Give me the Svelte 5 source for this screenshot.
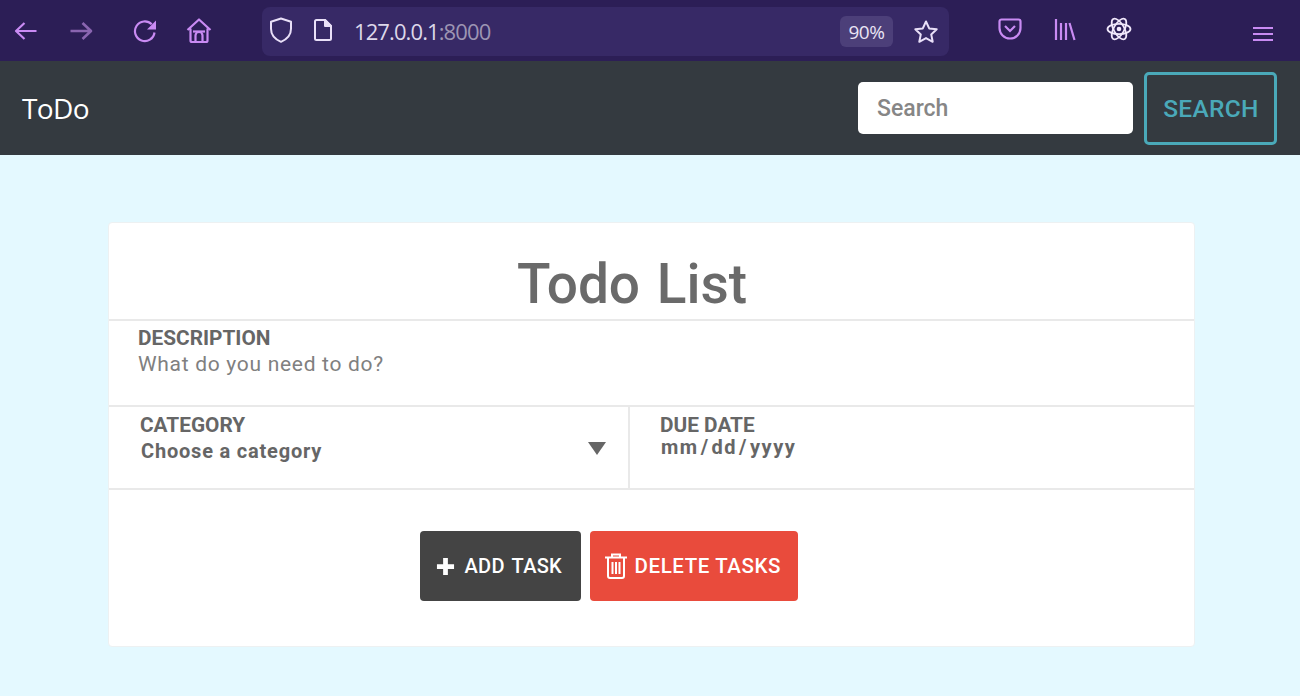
<script>
  let description = $state('');
  let query = $state('');
</script>

<div class="chrome">
  <div class="nav-icons">
    <button class="icon" aria-label="Back">
      <svg width="26" height="26" viewBox="0 0 26 26"><path d="M23.5 13H3M11.5 5L3 13l8.500 8" /></svg>
    </button>
    <button class="icon dim" aria-label="Forward">
      <svg width="26" height="26" viewBox="0 0 26 26"><path d="M2.500 13H23M14.500 5l8.500 8-8.500 8" /></svg>
    </button>
    <button class="icon reload" aria-label="Reload">
      <svg width="26" height="26" viewBox="0 0 26 26"><path d="M21.500 14.500a9.800 9.800 0 1 1-2.800-8.200" /><path class="solid" d="M23 2.500v9h-9z" /></svg>
    </button>
    <button class="icon home" aria-label="Home">
      <svg width="26" height="26" viewBox="0 0 26 26"><path d="M1.500 12L13 1.500 24.500 12M4.500 10.500v12a1.500 1.500 0 0 0 1.500 1.500h14a1.500 1.500 0 0 0 1.500-1.500v-12M9.500 24v-6.500a3.500 3.500 0 0 1 7 0V24" /><path d="M7 13.500h12" /></svg>
    </button>
  </div>
  <div class="urlbar">
    <svg class="shield" width="24" height="26" viewBox="0 0 24 26"><path d="M12 1.500l10 3.300v7c0 6-4 10.500-10 13-6-2.500-10-7-10-13v-7z" /></svg>
    <svg class="page" width="20" height="24" viewBox="0 0 20 24"><path d="M3.500 2h8.500l6 6v12.500a1.500 1.500 0 0 1-1.500 1.500h-13A1.500 1.500 0 0 1 2 20.500v-17A1.500 1.500 0 0 1 3.500 2z" /><path class="fill" d="M12 2l6 6h-6z" /></svg>
    <span class="url">127.0.0.1<span class="port">:8000</span></span>
    <span class="zoom">90%</span>
    <svg class="star" width="26" height="26" viewBox="0 0 26 26"><path d="M13 2.500l3.200 6.900 7.500.9-5.500 5.100 1.500 7.400-6.700-3.700-6.700 3.700 1.500-7.400-5.500-5.100 7.500-.9z" /></svg>
  </div>
  <div class="tools">
    <svg class="pocket" width="24" height="22" viewBox="0 0 24 22"><path d="M3.500 1.500h17a2 2 0 0 1 2 2V10c0 5.800-4.700 10.500-10.500 10.500S1.500 15.800 1.500 10V3.500a2 2 0 0 1 2-2z" /><path d="M7 8l5 5 5-5" /></svg>
    <svg class="library" width="24" height="24" viewBox="0 0 24 24"><path d="M3 2v21M8 6v17M13 6v17M16.500 6l5 17" /></svg>
    <svg class="react" width="26" height="26" viewBox="0 0 26 26">
      <ellipse cx="13" cy="13" rx="11.500" ry="5.200" />
      <ellipse cx="13" cy="13" rx="11.500" ry="5.200" transform="rotate(60 13 13)" />
      <ellipse cx="13" cy="13" rx="11.500" ry="5.200" transform="rotate(120 13 13)" />
      <circle class="core" cx="13" cy="13" r="2.300" />
    </svg>
  </div>
  <svg class="menu" width="20" height="16" viewBox="0 0 20 16"><path d="M0 2h20M0 8h20M0 14h20" /></svg>
</div>

<nav class="navbar">
  <span class="brand">ToDo</span>
  <form class="search" onsubmit={(e) => e.preventDefault()}>
    <input type="text" placeholder="Search" bind:value={query} />
    <button type="submit">SEARCH</button>
  </form>
</nav>

<main>
  <section class="card">
    <h1>Todo List</h1>
    <div class="row desc">
      <label for="description">DESCRIPTION</label>
      <input id="description" type="text" placeholder="What do you need to do?" bind:value={description} />
    </div>
    <div class="row split">
      <div class="cell category">
        <span class="label">CATEGORY</span>
        <span class="value">Choose a category</span>
        <span class="caret"></span>
      </div>
      <div class="cell due">
        <span class="label">DUE DATE</span>
        <span class="value date">mm<i>/</i>dd<i>/</i>yyyy</span>
      </div>
    </div>
    <div class="actions">
      <button class="add">
        <svg width="19" height="19" viewBox="0 0 20 20"><path d="M7.500 1h5v6.500H19v5h-6.500V19h-5v-6.500H1v-5h6.500z" /></svg>
        ADD TASK
      </button>
      <button class="delete">
        <svg width="24" height="26" viewBox="0 0 24 26"><path d="M1 4.500h22M8 4.500V1.500h8v3M4 4.500V23a2 2 0 0 0 2 2h12a2 2 0 0 0 2-2V4.500M8.500 9v12M12 9v12M15.500 9v12" /></svg>
        DELETE TASKS
      </button>
    </div>
  </section>
</main>

<style>
  :global(body) {
    background: #e4f9ff;
    font-family: Roboto, sans-serif;
  }

  button {
    font-family: inherit;
    cursor: pointer;
  }

  /* browser toolbar */
  .chrome {
    display: flex;
    align-items: flex-start;
    height: 61px;
    background: #2c1e56;
    box-sizing: border-box;
    padding-top: 7px;
  }

  .nav-icons {
    display: flex;
    align-items: center;
    width: 262px;
    height: 48px;
    padding-left: 13px;
    box-sizing: border-box;
  }

  .icon {
    display: flex;
    padding: 0;
    border: 0;
    background: none;
    margin-right: 29px;
  }

  .icon.reload {
    margin-left: 10px;
  }

  .icon.home {
    margin-left: -2px;
  }

  svg path, svg ellipse {
    fill: none;
  }

  .icon path {
    stroke: #c98bf3;
    stroke-width: 2.200;
    stroke-linejoin: round;
  }

  .icon.dim path {
    stroke: #8a65b0;
    stroke-width: 2.600;
  }

  .icon .solid {
    fill: #c98bf3;
    stroke: none;
  }

  .urlbar {
    display: flex;
    align-items: center;
    width: 687px;
    height: 49px;
    padding: 0 10px 0 7px;
    box-sizing: border-box;
    background: #372966;
    border-radius: 8px;
  }

  .shield path, .page path, .star path {
    stroke: #e9e0f8;
    stroke-width: 2;
    stroke-linejoin: round;
  }

  .shield, .page {
    margin-bottom: 3px;
  }

  .page {
    margin-left: 20px;
  }

  .page .fill {
    fill: #e9e0f8;
  }

  .url {
    margin: 0 0 2px 21px;
    flex: 1;
    font: 22px "Open Sans", sans-serif;
    letter-spacing: -0.9px;
    color: #ddd8ea;
  }

  .port {
    color: #9d95b3;
  }

  .zoom {
    display: flex;
    align-items: center;
    justify-content: center;
    width: 53px;
    height: 31px;
    margin-right: 20px;
    border-radius: 6px;
    background: #4c3f79;
    color: #e9e4f4;
    font: 500 19px "Open Sans", sans-serif;
    letter-spacing: -0.4px;
  }

  .tools {
    display: flex;
    align-items: center;
    gap: 31px;
    height: 44px;
    margin-left: 49px;
  }

  .pocket path, .library path {
    stroke: #c98bf3;
    stroke-width: 2.200;
  }

  .react {
    margin-left: -2px;
  }

  .react ellipse {
    stroke: #f1e8fb;
    stroke-width: 1.800;
  }

  .react .core {
    fill: #f1e8fb;
  }

  .menu {
    margin: 19px 27px 0 auto;
  }

  .menu path {
    stroke: #c98bf3;
    stroke-width: 2;
  }

  /* page navbar */
  .navbar {
    display: flex;
    align-items: center;
    justify-content: space-between;
    height: 94px;
    padding: 0 23px 0 22px;
    background: #343a40;
  }

  .brand {
    color: #fff;
    font: 500 28px "Open Sans", sans-serif;
    letter-spacing: -0.6px;
  }

  .search {
    display: flex;
    align-items: center;
    gap: 11px;
  }

  .search input {
    width: 275px;
    height: 52px;
    padding: 0 19px;
    box-sizing: border-box;
    border: 0;
    border-radius: 5px;
    background: #fff;
    font: 500 23px Roboto, sans-serif;
    outline: none;
  }

  .search input::placeholder {
    color: #868686;
    opacity: 1;
  }

  .search button {
    width: 133px;
    height: 73px;
    border: 3px solid #4aa9b9;
    border-radius: 5px;
    background: none;
    color: #4aa9b9;
    font-size: 24.500px;
    font-weight: 500;
    letter-spacing: 0.3px;
    padding: 0 0 0 1px;
  }

  /* card */
  main {
    padding: 67px 105px 49px 108px;
  }

  .card {
    background: #fff;
    border: 1px solid #edf1f2;
    border-radius: 4px;
    box-sizing: border-box;
    height: 425px;
  }

  h1 {
    margin: 0;
    height: 98px;
    padding-right: 39px;
    box-sizing: border-box;
    border-bottom: 2px solid #e9e9e9;
    text-align: center;
    color: #6a6a6a;
    font: 500 55px/123px Roboto, sans-serif;
    word-spacing: 3px;
    overflow: hidden;
  }

  .row {
    border-bottom: 2px solid #e9e9e9;
    box-sizing: border-box;
  }

  .desc {
    display: flex;
    flex-direction: column;
    height: 86px;
    padding: 5px 29px 0;
  }

  .desc label, .label {
    color: #666;
    font: 700 20.800px/24px Roboto, sans-serif;
  }

  .desc input {
    border: 0;
    padding: 0;
    margin-top: 1px;
    height: 26px;
    font: 21px Roboto, sans-serif;
    letter-spacing: 0.7px;
    outline: none;
  }

  .desc input::placeholder {
    color: #808080;
    opacity: 1;
  }

  .split {
    display: grid;
    grid-template-columns: 521px 1fr;
    height: 83px;
  }

  .cell {
    position: relative;
    display: flex;
    flex-direction: column;
    padding-top: 6px;
  }

  .category {
    border-right: 2px solid #e9e9e9;
    padding-left: 31px;
  }

  .due {
    padding-left: 30px;
  }

  .value {
    margin: 1px 0 0 1px;
    color: #666;
    font: 700 20px/26px Roboto, sans-serif;
    letter-spacing: 0.8px;
  }

  .date {
    margin-top: -3px;
    letter-spacing: 1.500px;
  }

  .date i {
    font-style: normal;
    margin: 0 2px;
  }

  .caret {
    position: absolute;
    right: 22px;
    top: 35px;
    border-left: 9.500px solid transparent;
    border-right: 9.500px solid transparent;
    border-top: 13px solid #666;
  }

  .actions {
    display: flex;
    justify-content: center;
    gap: 9px;
    padding: 41px 84px 0 1px;
    margin-left: -3px;
  }

  .actions button {
    display: flex;
    align-items: center;
    height: 70px;
    border: 0;
    border-radius: 4px;
    color: #fff;
    font-size: 20.500px;
    font-weight: 500;
  }

  .add {
    width: 161px;
    gap: 10px;
    padding: 0 0 0 16px;
    background: #444;
    font-size: 20px !important;
    letter-spacing: 0.3px;
    word-spacing: 2px;
  }

  .add path {
    fill: #fff;
  }

  .delete {
    width: 208px;
    gap: 7px;
    padding: 0 0 0 14px;
    background: #e94b3c;
    letter-spacing: 0.6px;
  }

  .delete path {
    stroke: #fff;
    stroke-width: 2;
  }
</style>
